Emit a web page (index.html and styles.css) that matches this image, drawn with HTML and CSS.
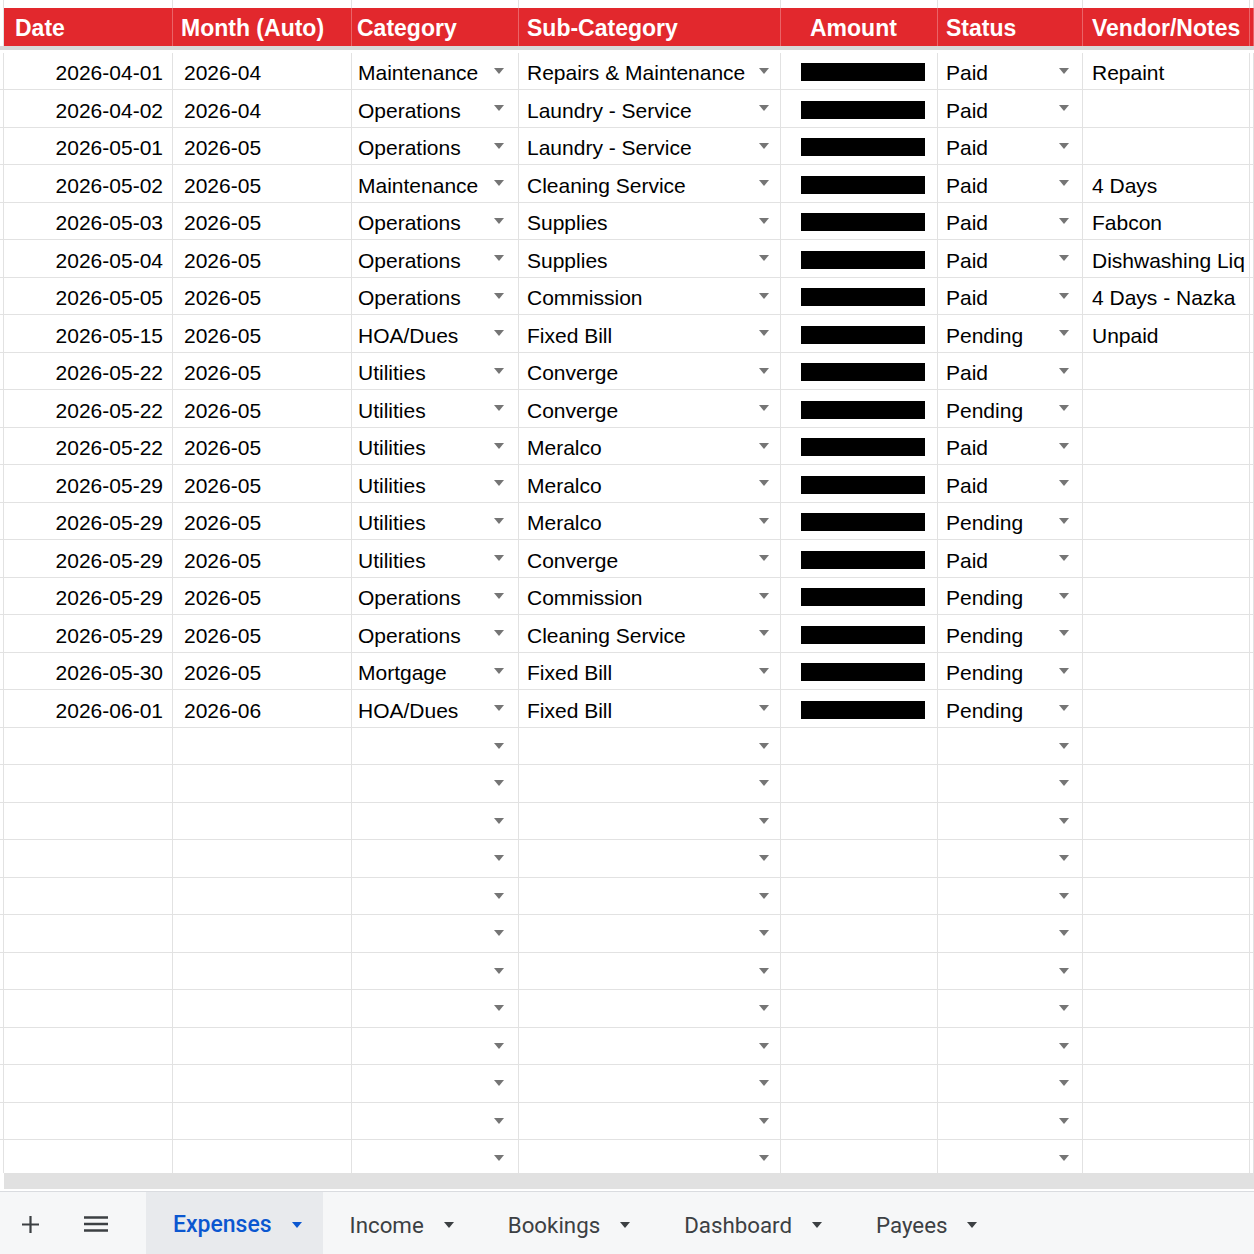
FILE: index.html
```html
<!DOCTYPE html>
<html lang="en">
<head>
  <meta charset="UTF-8">
  <title>Expenses</title>
  <link rel="stylesheet" href="styles.css">
</head>
<body>

<!-- Sheet grid -->
<div class="sheet">
  <div class="row row-top">
    <div class="cell edge"></div><div class="cell"></div><div class="cell"></div><div class="cell"></div><div class="cell"></div><div class="cell"></div><div class="cell"></div><div class="cell"></div><div class="cell"></div>
  </div>
  <div class="row row-head">
    <div class="cell edge"></div>
    <div class="cell date">Date</div>
    <div class="cell month">Month (Auto)</div>
    <div class="cell cat">Category</div>
    <div class="cell sub">Sub-Category</div>
    <div class="cell amt">Amount</div>
    <div class="cell status">Status</div>
    <div class="cell note">Vendor/Notes</div>
    <div class="cell"></div>
  </div>
  <div class="freeze"></div>

  <div class="row row-data">
    <div class="cell edge"></div><div class="cell date">2026-04-01</div><div class="cell month">2026-04</div>
    <div class="cell cat"><span class="val">Maintenance</span><span class="dd"></span></div>
    <div class="cell sub"><span class="val">Repairs &amp; Maintenance</span><span class="dd"></span></div>
    <div class="cell amt"><span class="redact"></span></div>
    <div class="cell status"><span class="val">Paid</span><span class="dd"></span></div>
    <div class="cell note">Repaint</div><div class="cell"></div>
  </div>
  <div class="row row-data">
    <div class="cell edge"></div><div class="cell date">2026-04-02</div><div class="cell month">2026-04</div>
    <div class="cell cat"><span class="val">Operations</span><span class="dd"></span></div>
    <div class="cell sub"><span class="val">Laundry - Service</span><span class="dd"></span></div>
    <div class="cell amt"><span class="redact"></span></div>
    <div class="cell status"><span class="val">Paid</span><span class="dd"></span></div>
    <div class="cell note"></div><div class="cell"></div>
  </div>
  <div class="row row-data">
    <div class="cell edge"></div><div class="cell date">2026-05-01</div><div class="cell month">2026-05</div>
    <div class="cell cat"><span class="val">Operations</span><span class="dd"></span></div>
    <div class="cell sub"><span class="val">Laundry - Service</span><span class="dd"></span></div>
    <div class="cell amt"><span class="redact"></span></div>
    <div class="cell status"><span class="val">Paid</span><span class="dd"></span></div>
    <div class="cell note"></div><div class="cell"></div>
  </div>
  <div class="row row-data">
    <div class="cell edge"></div><div class="cell date">2026-05-02</div><div class="cell month">2026-05</div>
    <div class="cell cat"><span class="val">Maintenance</span><span class="dd"></span></div>
    <div class="cell sub"><span class="val">Cleaning Service</span><span class="dd"></span></div>
    <div class="cell amt"><span class="redact"></span></div>
    <div class="cell status"><span class="val">Paid</span><span class="dd"></span></div>
    <div class="cell note">4 Days</div><div class="cell"></div>
  </div>
  <div class="row row-data">
    <div class="cell edge"></div><div class="cell date">2026-05-03</div><div class="cell month">2026-05</div>
    <div class="cell cat"><span class="val">Operations</span><span class="dd"></span></div>
    <div class="cell sub"><span class="val">Supplies</span><span class="dd"></span></div>
    <div class="cell amt"><span class="redact"></span></div>
    <div class="cell status"><span class="val">Paid</span><span class="dd"></span></div>
    <div class="cell note">Fabcon</div><div class="cell"></div>
  </div>
  <div class="row row-data">
    <div class="cell edge"></div><div class="cell date">2026-05-04</div><div class="cell month">2026-05</div>
    <div class="cell cat"><span class="val">Operations</span><span class="dd"></span></div>
    <div class="cell sub"><span class="val">Supplies</span><span class="dd"></span></div>
    <div class="cell amt"><span class="redact"></span></div>
    <div class="cell status"><span class="val">Paid</span><span class="dd"></span></div>
    <div class="cell note">Dishwashing Liq</div><div class="cell"></div>
  </div>
  <div class="row row-data">
    <div class="cell edge"></div><div class="cell date">2026-05-05</div><div class="cell month">2026-05</div>
    <div class="cell cat"><span class="val">Operations</span><span class="dd"></span></div>
    <div class="cell sub"><span class="val">Commission</span><span class="dd"></span></div>
    <div class="cell amt"><span class="redact"></span></div>
    <div class="cell status"><span class="val">Paid</span><span class="dd"></span></div>
    <div class="cell note">4 Days - Nazka</div><div class="cell"></div>
  </div>
  <div class="row row-data">
    <div class="cell edge"></div><div class="cell date">2026-05-15</div><div class="cell month">2026-05</div>
    <div class="cell cat"><span class="val">HOA/Dues</span><span class="dd"></span></div>
    <div class="cell sub"><span class="val">Fixed Bill</span><span class="dd"></span></div>
    <div class="cell amt"><span class="redact"></span></div>
    <div class="cell status"><span class="val">Pending</span><span class="dd"></span></div>
    <div class="cell note">Unpaid</div><div class="cell"></div>
  </div>
  <div class="row row-data">
    <div class="cell edge"></div><div class="cell date">2026-05-22</div><div class="cell month">2026-05</div>
    <div class="cell cat"><span class="val">Utilities</span><span class="dd"></span></div>
    <div class="cell sub"><span class="val">Converge</span><span class="dd"></span></div>
    <div class="cell amt"><span class="redact"></span></div>
    <div class="cell status"><span class="val">Paid</span><span class="dd"></span></div>
    <div class="cell note"></div><div class="cell"></div>
  </div>
  <div class="row row-data">
    <div class="cell edge"></div><div class="cell date">2026-05-22</div><div class="cell month">2026-05</div>
    <div class="cell cat"><span class="val">Utilities</span><span class="dd"></span></div>
    <div class="cell sub"><span class="val">Converge</span><span class="dd"></span></div>
    <div class="cell amt"><span class="redact"></span></div>
    <div class="cell status"><span class="val">Pending</span><span class="dd"></span></div>
    <div class="cell note"></div><div class="cell"></div>
  </div>
  <div class="row row-data">
    <div class="cell edge"></div><div class="cell date">2026-05-22</div><div class="cell month">2026-05</div>
    <div class="cell cat"><span class="val">Utilities</span><span class="dd"></span></div>
    <div class="cell sub"><span class="val">Meralco</span><span class="dd"></span></div>
    <div class="cell amt"><span class="redact"></span></div>
    <div class="cell status"><span class="val">Paid</span><span class="dd"></span></div>
    <div class="cell note"></div><div class="cell"></div>
  </div>
  <div class="row row-data">
    <div class="cell edge"></div><div class="cell date">2026-05-29</div><div class="cell month">2026-05</div>
    <div class="cell cat"><span class="val">Utilities</span><span class="dd"></span></div>
    <div class="cell sub"><span class="val">Meralco</span><span class="dd"></span></div>
    <div class="cell amt"><span class="redact"></span></div>
    <div class="cell status"><span class="val">Paid</span><span class="dd"></span></div>
    <div class="cell note"></div><div class="cell"></div>
  </div>
  <div class="row row-data">
    <div class="cell edge"></div><div class="cell date">2026-05-29</div><div class="cell month">2026-05</div>
    <div class="cell cat"><span class="val">Utilities</span><span class="dd"></span></div>
    <div class="cell sub"><span class="val">Meralco</span><span class="dd"></span></div>
    <div class="cell amt"><span class="redact"></span></div>
    <div class="cell status"><span class="val">Pending</span><span class="dd"></span></div>
    <div class="cell note"></div><div class="cell"></div>
  </div>
  <div class="row row-data">
    <div class="cell edge"></div><div class="cell date">2026-05-29</div><div class="cell month">2026-05</div>
    <div class="cell cat"><span class="val">Utilities</span><span class="dd"></span></div>
    <div class="cell sub"><span class="val">Converge</span><span class="dd"></span></div>
    <div class="cell amt"><span class="redact"></span></div>
    <div class="cell status"><span class="val">Paid</span><span class="dd"></span></div>
    <div class="cell note"></div><div class="cell"></div>
  </div>
  <div class="row row-data">
    <div class="cell edge"></div><div class="cell date">2026-05-29</div><div class="cell month">2026-05</div>
    <div class="cell cat"><span class="val">Operations</span><span class="dd"></span></div>
    <div class="cell sub"><span class="val">Commission</span><span class="dd"></span></div>
    <div class="cell amt"><span class="redact"></span></div>
    <div class="cell status"><span class="val">Pending</span><span class="dd"></span></div>
    <div class="cell note"></div><div class="cell"></div>
  </div>
  <div class="row row-data">
    <div class="cell edge"></div><div class="cell date">2026-05-29</div><div class="cell month">2026-05</div>
    <div class="cell cat"><span class="val">Operations</span><span class="dd"></span></div>
    <div class="cell sub"><span class="val">Cleaning Service</span><span class="dd"></span></div>
    <div class="cell amt"><span class="redact"></span></div>
    <div class="cell status"><span class="val">Pending</span><span class="dd"></span></div>
    <div class="cell note"></div><div class="cell"></div>
  </div>
  <div class="row row-data">
    <div class="cell edge"></div><div class="cell date">2026-05-30</div><div class="cell month">2026-05</div>
    <div class="cell cat"><span class="val">Mortgage</span><span class="dd"></span></div>
    <div class="cell sub"><span class="val">Fixed Bill</span><span class="dd"></span></div>
    <div class="cell amt"><span class="redact"></span></div>
    <div class="cell status"><span class="val">Pending</span><span class="dd"></span></div>
    <div class="cell note"></div><div class="cell"></div>
  </div>
  <div class="row row-data">
    <div class="cell edge"></div><div class="cell date">2026-06-01</div><div class="cell month">2026-06</div>
    <div class="cell cat"><span class="val">HOA/Dues</span><span class="dd"></span></div>
    <div class="cell sub"><span class="val">Fixed Bill</span><span class="dd"></span></div>
    <div class="cell amt"><span class="redact"></span></div>
    <div class="cell status"><span class="val">Pending</span><span class="dd"></span></div>
    <div class="cell note"></div><div class="cell"></div>
  </div>

  <!-- empty rows, dropdowns only -->
  <div class="row row-data"><div class="cell edge"></div><div class="cell date"></div><div class="cell month"></div><div class="cell cat"><span class="dd"></span></div><div class="cell sub"><span class="dd"></span></div><div class="cell amt"></div><div class="cell status"><span class="dd"></span></div><div class="cell note"></div><div class="cell"></div></div>
  <div class="row row-data"><div class="cell edge"></div><div class="cell date"></div><div class="cell month"></div><div class="cell cat"><span class="dd"></span></div><div class="cell sub"><span class="dd"></span></div><div class="cell amt"></div><div class="cell status"><span class="dd"></span></div><div class="cell note"></div><div class="cell"></div></div>
  <div class="row row-data"><div class="cell edge"></div><div class="cell date"></div><div class="cell month"></div><div class="cell cat"><span class="dd"></span></div><div class="cell sub"><span class="dd"></span></div><div class="cell amt"></div><div class="cell status"><span class="dd"></span></div><div class="cell note"></div><div class="cell"></div></div>
  <div class="row row-data"><div class="cell edge"></div><div class="cell date"></div><div class="cell month"></div><div class="cell cat"><span class="dd"></span></div><div class="cell sub"><span class="dd"></span></div><div class="cell amt"></div><div class="cell status"><span class="dd"></span></div><div class="cell note"></div><div class="cell"></div></div>
  <div class="row row-data"><div class="cell edge"></div><div class="cell date"></div><div class="cell month"></div><div class="cell cat"><span class="dd"></span></div><div class="cell sub"><span class="dd"></span></div><div class="cell amt"></div><div class="cell status"><span class="dd"></span></div><div class="cell note"></div><div class="cell"></div></div>
  <div class="row row-data"><div class="cell edge"></div><div class="cell date"></div><div class="cell month"></div><div class="cell cat"><span class="dd"></span></div><div class="cell sub"><span class="dd"></span></div><div class="cell amt"></div><div class="cell status"><span class="dd"></span></div><div class="cell note"></div><div class="cell"></div></div>
  <div class="row row-data"><div class="cell edge"></div><div class="cell date"></div><div class="cell month"></div><div class="cell cat"><span class="dd"></span></div><div class="cell sub"><span class="dd"></span></div><div class="cell amt"></div><div class="cell status"><span class="dd"></span></div><div class="cell note"></div><div class="cell"></div></div>
  <div class="row row-data"><div class="cell edge"></div><div class="cell date"></div><div class="cell month"></div><div class="cell cat"><span class="dd"></span></div><div class="cell sub"><span class="dd"></span></div><div class="cell amt"></div><div class="cell status"><span class="dd"></span></div><div class="cell note"></div><div class="cell"></div></div>
  <div class="row row-data"><div class="cell edge"></div><div class="cell date"></div><div class="cell month"></div><div class="cell cat"><span class="dd"></span></div><div class="cell sub"><span class="dd"></span></div><div class="cell amt"></div><div class="cell status"><span class="dd"></span></div><div class="cell note"></div><div class="cell"></div></div>
  <div class="row row-data"><div class="cell edge"></div><div class="cell date"></div><div class="cell month"></div><div class="cell cat"><span class="dd"></span></div><div class="cell sub"><span class="dd"></span></div><div class="cell amt"></div><div class="cell status"><span class="dd"></span></div><div class="cell note"></div><div class="cell"></div></div>
  <div class="row row-data"><div class="cell edge"></div><div class="cell date"></div><div class="cell month"></div><div class="cell cat"><span class="dd"></span></div><div class="cell sub"><span class="dd"></span></div><div class="cell amt"></div><div class="cell status"><span class="dd"></span></div><div class="cell note"></div><div class="cell"></div></div>
  <div class="row row-data"><div class="cell edge"></div><div class="cell date"></div><div class="cell month"></div><div class="cell cat"><span class="dd"></span></div><div class="cell sub"><span class="dd"></span></div><div class="cell amt"></div><div class="cell status"><span class="dd"></span></div><div class="cell note"></div><div class="cell"></div></div>
</div>

<!-- Scrollbar + sheet tabs -->
<div class="hscroll"></div>
<div class="tabbar">
  <div class="tools">
    <svg class="icon" width="17" height="17" viewBox="0 0 17 17"><path d="M8.5 0v17M0 8.5h17" stroke="#3c4043" stroke-width="2.2" fill="none"/></svg>
    <svg class="icon" width="24" height="16" viewBox="0 0 24 16"><path d="M0 1.5h24M0 8h24M0 14.5h24" stroke="#3c4043" stroke-width="2.4" fill="none"/></svg>
  </div>
  <div class="tab active">Expenses<span class="caret"></span></div>
  <div class="tab">Income<span class="caret"></span></div>
  <div class="tab">Bookings<span class="caret"></span></div>
  <div class="tab">Dashboard<span class="caret"></span></div>
  <div class="tab">Payees<span class="caret"></span></div>
</div>

</body>
</html>
```

FILE: styles.css
```css
/* Reset */
* {
  margin: 0;
  padding: 0;
  box-sizing: border-box;
}
body {
  font-family: "Liberation Sans", Arial, sans-serif;
  background-color: white;
  width: 1254px;
  height: 1254px;
  overflow: hidden;
  display: flex;
  flex-direction: column;
}

/* Grid */
.sheet {
  height: 1173px;
  flex-shrink: 0;
  overflow: hidden;
}
.row {
  display: grid;
  grid-template-columns: 4px 169px 179px 167px 262px 157px 145px 167px 1fr;
}
.cell {
  display: flex;
  align-items: flex-end;
  min-width: 0;
  overflow: hidden;
  white-space: nowrap;
  border-right: 1px solid #e2e2e2;
  border-bottom: 1px solid #e2e2e2;
}
.val {
  overflow: hidden;
}
.row-top {
  height: 8px;
}
.row-top .cell {
  border-bottom: none;
}
.row-head {
  height: 38px;
  background-color: #e2282d;
  color: white;
  font-weight: bold;
  font-size: 23px;
  line-height: 26px;
}
.row-head .cell {
  border-bottom: none;
  border-right-color: rgba(255,255,255,0.28);
  padding-bottom: 5px;
}
.row-head .edge {
  background-color: white;
  border-right-color: #e2e2e2;
}
.freeze {
  height: 6.5px;
  border-top: 4px solid #d8d8d8;
  background-color: white;
}
.row-data {
  height: 37.5px;
  font-size: 21px;
  line-height: 25px;
  color: black;
}
.row-data .cell {
  padding-bottom: 4px;
}

/* Columns */
.date { justify-content: flex-end; padding-right: 9px; }
.row-head .date { justify-content: flex-start; padding-left: 11px; }
.month { padding-left: 11px; }
.row-head .month { padding-left: 8px; }
.cat { padding-left: 6px; }
.row-head .cat { padding-left: 5px; }
.sub { padding-left: 8px; }
.amt { padding-left: 20px; }
.row-head .amt { padding-left: 29px; }
.status { padding-left: 8px; }
.note { padding-left: 9px; }
.row-head .note { padding-left: 9px; }

.dd {
  align-self: center;
  flex-shrink: 0;
  margin-left: auto;
  margin-top: 4px;
  border-left: 5.5px solid transparent;
  border-right: 5.5px solid transparent;
  border-top: 6px solid #757575;
}
.cat .dd { margin-right: 14px; }
.sub .dd { margin-right: 11px; }
.status .dd { margin-right: 13px; }
.redact {
  width: 124px;
  height: 18px;
  background-color: black;
  margin-bottom: 4px;
}

/* Bottom bar */
.hscroll {
  height: 18px;
  flex-shrink: 0;
  margin-left: 4px;
  background-color: #e1e1e1;
  border-bottom: 2px solid white;
}
.tabbar {
  height: 63px;
  flex-shrink: 0;
  display: flex;
  align-items: stretch;
  background-color: #f6f7f8;
  border-top: 1px solid #dadce0;
  font-family: Roboto, "Liberation Sans", sans-serif;
  font-size: 22.3px;
  line-height: 26px;
  color: #3c4043;
}
.tools {
  width: 146px;
  display: flex;
  align-items: center;
  gap: 45px;
  padding-left: 22px;
  padding-top: 2px;
}
.tab {
  display: flex;
  align-items: center;
  gap: 20px;
  padding: 3px 27px 0 27px;
}
.tab.active {
  background-color: #e8eaed;
  color: #0b57d0;
  font-size: 23px;
  font-weight: 500;
  padding-right: 21px;
}
.caret {
  border-left: 5.5px solid transparent;
  border-right: 5.5px solid transparent;
  border-top: 6px solid currentColor;
}
```
